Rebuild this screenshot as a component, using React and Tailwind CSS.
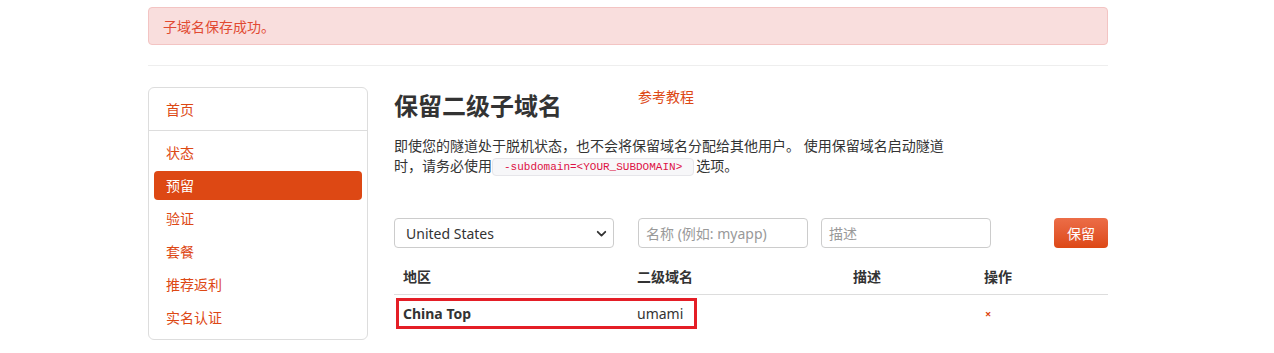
import React from "react";

const navTop = ["首页"];
const navItems = ["状态", "预留", "验证", "套餐", "推荐返利", "实名认证"];

function Sidebar() {
  return (
    <div className="w-[220px] shrink-0 rounded-[6px] border border-[#dddddd] bg-white">
      {navTop.map((item) => (
        <div key={item} className="flex h-[43px] items-center border-b border-[#dddddd] pl-[17px] text-[14px] text-[#dd4814]">
          {item}
        </div>
      ))}
      <div className="pt-[5px] pb-[5px]">
        {navItems.map((item) => (
          <div key={item} className="flex h-[33px] items-center">
            {item === "预留" ? (
              <div className="mx-[5px] flex h-[29px] w-full items-center rounded-[4px] bg-[#dd4814] pl-[12px] text-[14px] text-white">
                {item}
              </div>
            ) : (
              <span className="pl-[17px] text-[14px] text-[#dd4814]">{item}</span>
            )}
          </div>
        ))}
      </div>
    </div>
  );
}

function ChevronDown() {
  return (
    <svg width="11" height="11" viewBox="0 0 16 16" className="text-[#333]">
      <path d="M2.5 5.5 8 11l5.5-5.5" fill="none" stroke="currentColor" strokeWidth="2.6" strokeLinecap="round" strokeLinejoin="round" />
    </svg>
  );
}

export default function App() {
  return (
    <div
      className="min-h-[353px] w-full bg-white text-[#333]"
      style={{ fontFamily: '"Noto Sans", "Noto Sans CJK SC", sans-serif' }}
    >
      <div className="ml-[148px] w-[960px] pt-[7px]">
        {/* Alert */}
        <div className="flex h-[38px] items-center rounded-[4px] border border-[#f3c4c3] bg-[#f9dedd] pl-[14px] text-[14px] text-[#e14a32]">
          子域名保存成功。
        </div>

        <div className="mt-[20px] border-t border-[#eeeeee]" />

        <div className="mt-[21px] flex">
          <Sidebar />

          <div className="ml-[26px] flex-1">
            {/* Title */}
            <div className="flex items-start">
              <h2 className="mt-[5px] w-[244px] text-[24px] font-bold leading-[28px] text-[#333]">保留二级子域名</h2>
              <a className="text-[14px] leading-[20px] text-[#dd4814]">参考教程</a>
            </div>

            <p className="mt-[16px] w-[556px] text-[14px] leading-[20px] text-[#333]">
              即使您的隧道处于脱机状态，也不会将保留域名分配给其他用户。 使用保留域名启动隧道时，请务必使用
              <code
                className="mr-[2px] inline-block rounded-[4px] border border-[#e6e6ea] bg-[#f7f7f9] px-[11px] align-middle text-[11px] leading-[16px] text-[#dd1144]"
                style={{ fontFamily: '"Liberation Mono", monospace' }}
              >
                -subdomain=&lt;YOUR_SUBDOMAIN&gt;
              </code>
              选项。
            </p>

            {/* Form */}
            <div className="mt-[42px] flex h-[30px] items-center">
              <div className="relative h-[30px] w-[220px]">
                <div className="flex h-full w-full items-center justify-between rounded-[4px] border border-[#cccccc] bg-white pl-[11px] pr-[6px] text-[14px] text-[#333]">
                  <span>United States</span>
                  <ChevronDown />
                </div>
              </div>
              <div className="ml-[24px] flex h-[30px] w-[170px] items-center rounded-[4px] border border-[#cccccc] px-[7px] text-[14px] text-[#999999]">
                名称 (例如: myapp)
              </div>
              <div className="ml-[13px] flex h-[30px] w-[170px] items-center rounded-[4px] border border-[#cccccc] px-[7px] text-[14px] text-[#999999]">
                描述
              </div>
              <button className="ml-auto h-[30px] w-[54px] rounded-[4px] bg-gradient-to-b from-[#ec6d47] to-[#dd4814] text-[14px] text-white">
                保留
              </button>
            </div>

            {/* Table */}
            <div className="mt-[11px]">
              <div className="grid h-[36px] grid-cols-[235px_216px_131px_1fr] items-center border-b border-[#dddddd] text-[14px] font-bold text-[#333]">
                <div className="pl-[9px]">地区</div>
                <div className="pl-[8px]">二级域名</div>
                <div className="pl-[8px]">描述</div>
                <div className="pl-[8px]">操作</div>
              </div>
              <div className="relative grid h-[37px] grid-cols-[235px_216px_131px_1fr] items-center text-[14px] text-[#333]">
                <div className="pl-[9px] font-bold">China Top</div>
                <div className="pl-[8px]">umami</div>
                <div className="pl-[8px]" />
                <div className="pl-[9px] text-[11px] font-bold text-[#dd4814]">×</div>
                <div className="pointer-events-none absolute left-[2px] top-[3px] h-[31px] w-[301px] border-[3px] border-[#e41e26]" />
              </div>
            </div>
          </div>
        </div>
      </div>
    </div>
  );
}
